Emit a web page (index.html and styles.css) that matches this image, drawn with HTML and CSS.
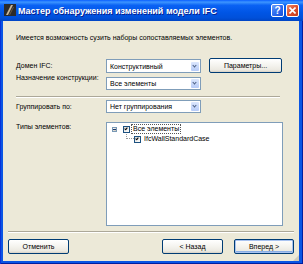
FILE: index.html
```html
<!DOCTYPE html>
<html lang="ru">
<head>
  <meta charset="UTF-8">
  <title>Мастер обнаружения изменений модели IFC</title>
  <link rel="stylesheet" href="styles.css">
</head>
<body>

  <div class="window">
    <div class="titlebar">
      <svg class="app-icon" width="12" height="12" viewBox="0 0 12 12">
        <rect x="0" y="0" width="12" height="12" fill="#2b2b2b"/>
        <path d="M2 11 L7 1 L9 1 L4 11 Z" fill="#c9b79a"/>
        <path d="M5 11 L9 3 L10 3 L6 11 Z" fill="#6b5a44"/>
      </svg>
      <span class="title">Мастер обнаружения изменений модели IFC</span>
      <span class="cap-btn help">?</span>
      <span class="cap-btn close">
        <svg width="7" height="7" viewBox="0 0 7 7">
          <path d="M0.5 0.5 L6.5 6.5 M6.5 0.5 L0.5 6.5" stroke="#fff" stroke-width="1.6"/>
        </svg>
      </span>
    </div>

    <div class="client">
      <p class="intro">Имеется возможность сузить наборы сопоставляемых элементов.</p>

      <div class="form first">
        <div class="label row1">Домен IFC:</div>
        <div class="combo row1"><span>Конструктивный</span><i class="drop"></i></div>
        <button class="btn params">Параметры...</button>

        <div class="label row2">Назначение конструкции:</div>
        <div class="combo row2"><span>Все элементы</span><i class="drop"></i></div>
      </div>

      <div class="sep inner"></div>

      <div class="form">
        <div class="label row3">Группировать по:</div>
        <div class="combo row3"><span>Нет группирования</span><i class="drop"></i></div>
      </div>

      <div class="form types">
        <div class="label">Типы элементов:</div>
        <div class="tree">
          <div class="node">
            <span class="expander"></span>
            <span class="check"></span>
            <span class="node-text focus">Все элементы</span>
          </div>
          <div class="node child">
            <span class="branch"></span>
            <span class="check"></span>
            <span class="node-text">IfcWallStandardCase</span>
          </div>
        </div>
      </div>

      <div class="sep outer"></div>

      <div class="footer">
        <button class="btn cancel">Отменить</button>
        <div class="nav">
          <button class="btn back">&lt; Назад</button>
          <button class="btn default">Вперед &gt;</button>
        </div>
      </div>
      <span class="grip"></span>
    </div>
  </div>

</body>
</html>
```

FILE: styles.css
```css
body {
  margin: 0;
  font-family: 'Liberation Sans', Arial, sans-serif;
  font-size: 7px;
  color: #000;
}

.window {
  width: 303px;
  height: 264px;
  display: flex;
  flex-direction: column;
  background: #0a55e4;
  box-shadow: inset 1px 0 0 #0831d9, inset -1px 0 0 #001ea0, inset 0 -1px 0 #001ea0;
}

/* title bar */
.titlebar {
  height: 21px;
  display: flex;
  align-items: center;
  padding: 0 4px 0 4px;
  background: linear-gradient(to bottom, #0a5fff 0%, #3d95ff 10%, #0a62f4 25%, #0055e5 60%, #0050da 85%, #0045c4 100%);
}

.app-icon {
  margin-top: -1px;
}

.title {
  flex: 1;
  margin-left: 2px;
  color: #fff;
  font-weight: bold;
  font-size: 9px;
  text-shadow: 1px 1px 0 #0a1e8c;
  white-space: nowrap;
}

.cap-btn {
  width: 11px;
  height: 11px;
  border: 1px solid #fff;
  border-radius: 2px;
  display: flex;
  align-items: center;
  justify-content: center;
  color: #fff;
  font-weight: bold;
  font-size: 10px;
  margin-top: -1px;
}

.help {
  background: linear-gradient(135deg, #6b9cf8 0%, #2d6cf0 50%, #1c4fd8 100%);
}

.close {
  margin-left: 2px;
  background: linear-gradient(135deg, #ea8a6a 0%, #e0502f 50%, #c23a1c 100%);
}

/* client area */
.client {
  flex: 1;
  margin: 0 4px 3px 3px;
  background: #ece9d8;
  display: flex;
  flex-direction: column;
  padding: 0 5px;
  position: relative;
}

.intro {
  margin: 12px 0 0 8px;
  line-height: 10px;
}

.form {
  display: grid;
  grid-template-columns: 82px 95px 73px;
  column-gap: 8px;
  row-gap: 4px;
  padding-left: 8px;
}

.form.first {
  margin-top: 16px;
}

.label {
  line-height: 11px;
  white-space: nowrap;
}

.row1.label,
.row3.label {
  line-height: 14px;
}

.row2.label {
  line-height: 9px;
  margin-top: -4px;
}

.combo {
  height: 11px;
  border: 1px solid #7f9db9;
  background: #fff;
  display: flex;
  align-items: center;
  justify-content: space-between;
  padding-left: 3px;
}

.combo.row1 {
  height: 12px;
}

.drop {
  width: 8px;
  height: 9px;
  margin-right: 1px;
  border-radius: 1px;
  background: linear-gradient(to bottom, #dce7fd, #b6cbf8);
  position: relative;
}

.drop::after {
  content: "";
  position: absolute;
  left: 2px;
  top: 2px;
  width: 2px;
  height: 2px;
  border-right: 1px solid #4d6185;
  border-bottom: 1px solid #4d6185;
  transform: rotate(45deg);
}

.btn {
  font-family: inherit;
  font-size: 7px;
  color: #000;
  height: 15px;
  padding: 0;
  border: 1px solid #003c74;
  border-radius: 2px;
  background: linear-gradient(to bottom, #ffffff 0%, #f4f3ee 50%, #ebe9e1 85%, #d6d0c5 100%);
}

.params {
  width: 73px;
  margin-top: -1px;
}

.sep {
  border-top: 1px solid #aca899;
  border-bottom: 1px solid #fff;
}

.sep.inner {
  margin: 6px 14px 2px 8px;
}

.form.types {
  margin-top: 8px;
}

.types .label {
  line-height: 9px;
}

.tree {
  grid-column: 2 / 4;
  box-sizing: border-box;
  width: 177px;
  height: 104px;
  border: 1px solid #7f9db9;
  background: #fff;
  padding-top: 1px;
}

.node {
  height: 10px;
  display: flex;
  align-items: center;
  padding-left: 5px;
}

.expander {
  width: 3px;
  height: 3px;
  border: 1px solid #7898b5;
  background: linear-gradient(135deg, #fff, #c6c2b5);
  position: relative;
}

.expander::after {
  content: "";
  position: absolute;
  left: 0;
  top: 1px;
  width: 3px;
  height: 1px;
  background: #1c3a6b;
}

.check {
  width: 5px;
  height: 5px;
  border: 1px solid #1c5180;
  background: linear-gradient(135deg, #dcdcd7, #fff);
  margin-left: 6px;
  position: relative;
}

.check::after {
  content: "";
  position: absolute;
  left: 1px;
  top: 0;
  width: 1px;
  height: 2px;
  border-right: 1.5px solid #000;
  border-bottom: 1.5px solid #000;
  transform: rotate(40deg);
}

.node-text {
  margin-left: 2px;
  padding: 0 1px;
  line-height: 8px;
}

.focus {
  outline: 1px dotted #555;
}

.child {
  padding-left: 19px;
}

.branch {
  width: 7px;
  height: 6px;
  margin-top: -7px;
  border-left: 1px dotted #999;
  border-bottom: 1px dotted #999;
}

.child .check {
  margin-left: 0;
}

.sep.outer {
  margin-top: 5px;
}

.footer {
  display: flex;
  justify-content: space-between;
  margin-top: 6px;
}

.cancel {
  width: 61px;
}

.nav {
  display: flex;
  gap: 11px;
}

.back {
  width: 61px;
}

.default {
  width: 60px;
  box-shadow: inset 0 0 0 1px #a9c3f0, inset 0 -1px 0 1px #89ade4;
}

.grip {
  position: absolute;
  right: 0;
  bottom: 0;
  width: 6px;
  height: 6px;
  background: radial-gradient(circle, #aca899 0.6px, transparent 0.8px) 0 0 / 2px 2px;
  clip-path: polygon(100% 0, 100% 100%, 0 100%);
}
```
